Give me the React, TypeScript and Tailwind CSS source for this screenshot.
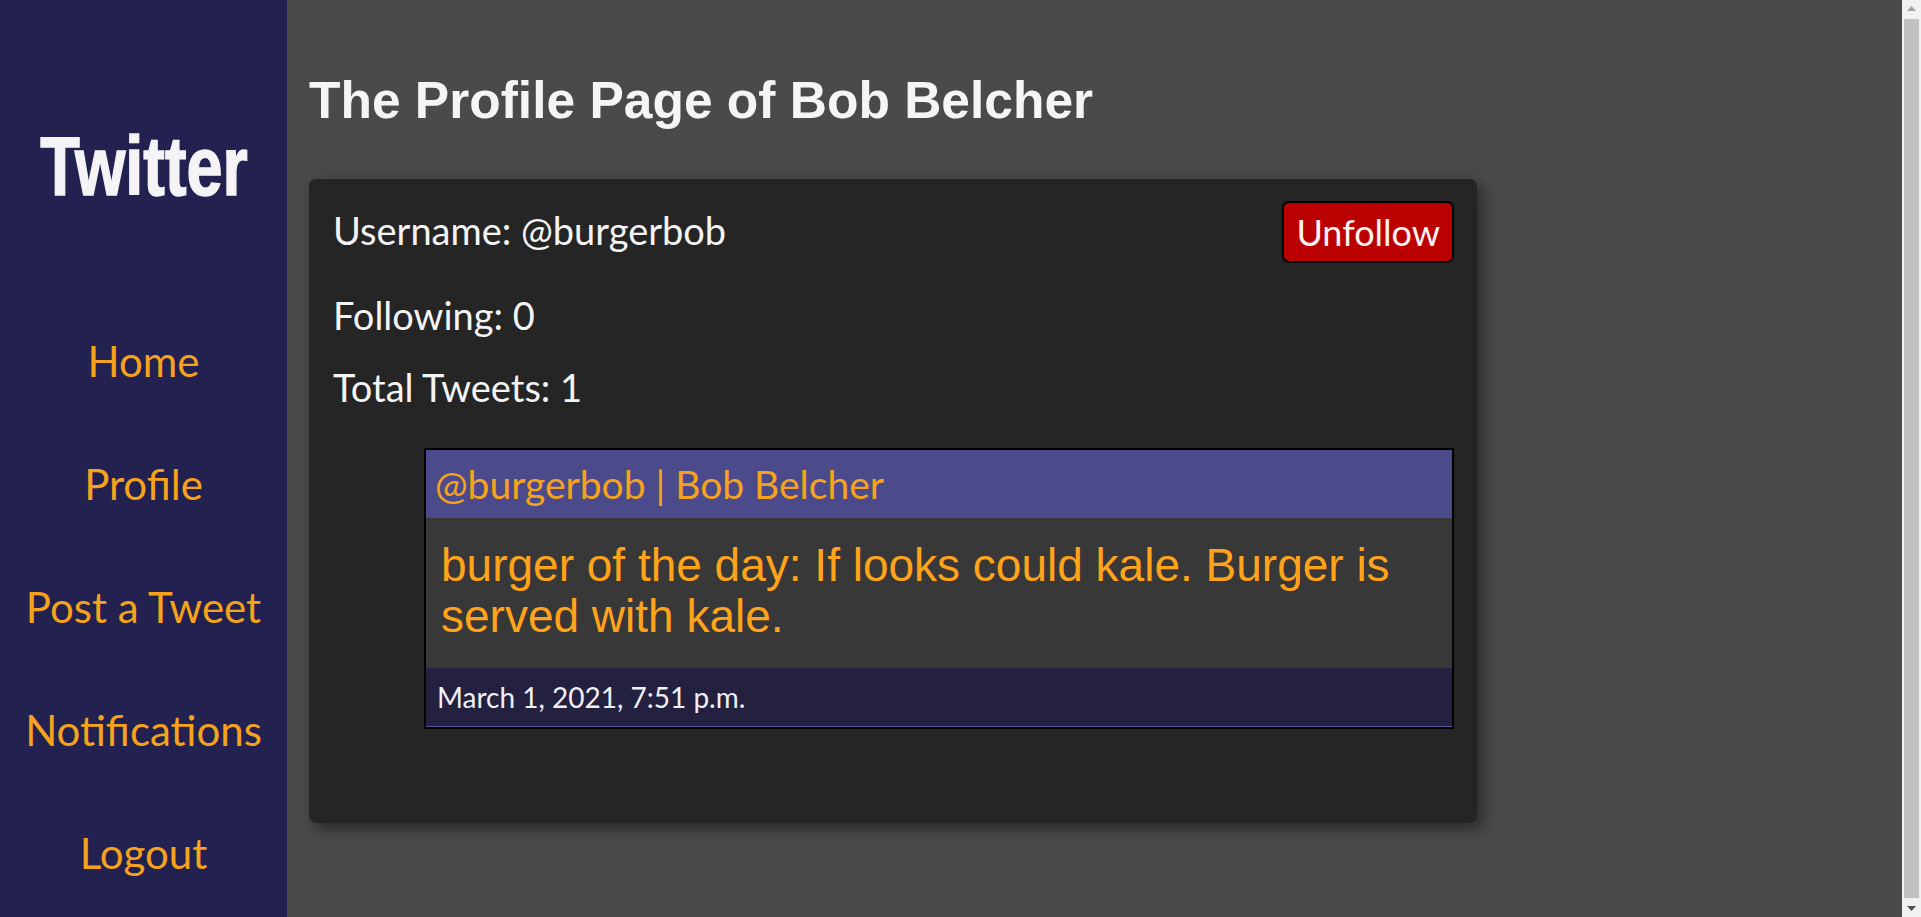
import React from "react";

const navItems = ["Home", "Profile", "Post a Tweet", "Notifications", "Logout"];

function FakeScrollbar() {
  return (
    <div className="flex h-screen w-[19px] shrink-0 flex-col items-center bg-[#f1f1f1]">
      <div className="flex h-[17px] w-full items-center justify-center">
        <svg width="9" height="5" viewBox="0 0 9 5">
          <path d="M0 5 L4.5 0 L9 5 Z" fill="#a3a3a3" />
        </svg>
      </div>
      <div className="flex-1 w-full px-[2px] py-[2px]">
        <div className="h-full w-full bg-[#c1c1c1]" />
      </div>
      <div className="flex h-[17px] w-full items-center justify-center">
        <svg width="9" height="5" viewBox="0 0 9 5">
          <path d="M0 0 L9 0 L4.5 5 Z" fill="#505050" />
        </svg>
      </div>
    </div>
  );
}

export default function App() {
  return (
    <div className="flex h-screen w-full overflow-hidden bg-[#4a4a4a]">
      <div className="flex min-h-[946px] flex-1">
        <aside className="flex w-[287px] shrink-0 flex-col items-center bg-[#22214f]">
          <div className="flex h-[300px] w-full items-start justify-center pt-[114px]">
            <h1
              className="inline-block scale-x-[0.83] scale-y-[1.06] text-[78px] leading-[104px] font-bold text-[#f4f4f6] [-webkit-text-stroke:1.5px_#f4f4f6]"
              style={{ fontFamily: '"Liberation Sans", Arial, sans-serif' }}
            >
              Twitter
            </h1>
          </div>
          <nav className="flex w-full flex-col items-center">
            {navItems.map((item) => (
              <a
                key={item}
                href="#"
                className="flex h-[123px] w-full items-center justify-center text-[42px] font-normal text-[#f5a21c]"
                style={{ fontFamily: 'Lato, "Noto Sans", sans-serif' }}
              >
                {item}
              </a>
            ))}
          </nav>
        </aside>
        <main className="flex-1 pl-[22px] pt-[62px]">
          <h2
            className="text-[51.5px] leading-[76px] font-bold text-[#f5f5f5]"
            style={{ fontFamily: '"Liberation Sans", Arial, sans-serif' }}
          >
            The Profile Page of Bob Belcher
          </h2>
          <section
            className="mt-[41px] w-[1168px] rounded-[7px] bg-[#252525] px-[23px] pb-[94px] pt-[22px] shadow-[6px_6px_16px_rgba(0,0,0,0.45)]"
            style={{ fontFamily: 'Lato, "Noto Sans", sans-serif' }}
          >
            <div className="flex items-start justify-between">
              <p className="pt-[7px] pl-[1px] text-[38px] leading-[44px] text-[#f4f4f4]">Username: @burgerbob</p>
              <button className="h-[62px] rounded-[7px] border-2 border-black bg-[#bb0000] px-[12px] text-[36px] leading-none text-[#fff3f3]">
                Unfollow
              </button>
            </div>
            <p className="mt-[30px] pl-[1px] text-[38px] leading-[44px] text-[#f4f4f4]">Following: 0</p>
            <p className="mt-[28px] pl-[1px] text-[38px] leading-[44px] text-[#f4f4f4]">Total Tweets: 1</p>
            <article className="ml-[92px] mt-[39px] border-2 border-black">
              <div className="flex h-[68px] items-center bg-[#4b4a8b] px-[9px] text-[39px] font-normal text-[#f5a21c]">
                @burgerbob | Bob Belcher
              </div>
              <div
                className="h-[150px] bg-[#383838] px-[15px] pt-[22px] text-[46px] leading-[51px] text-[#ffa31a]"
                style={{ fontFamily: '"Liberation Sans", Arial, sans-serif' }}
              >
                burger of the day: If looks could kale. Burger is served with kale.
              </div>
              <div className="flex h-[59px] items-center border-b border-[#5a58a0] bg-[#23213f] px-[11px] text-[28px] font-normal text-[#f0f0f6]">
                March 1, 2021, 7:51 p.m.
              </div>
            </article>
          </section>
        </main>
      </div>
      <FakeScrollbar />
    </div>
  );
}
